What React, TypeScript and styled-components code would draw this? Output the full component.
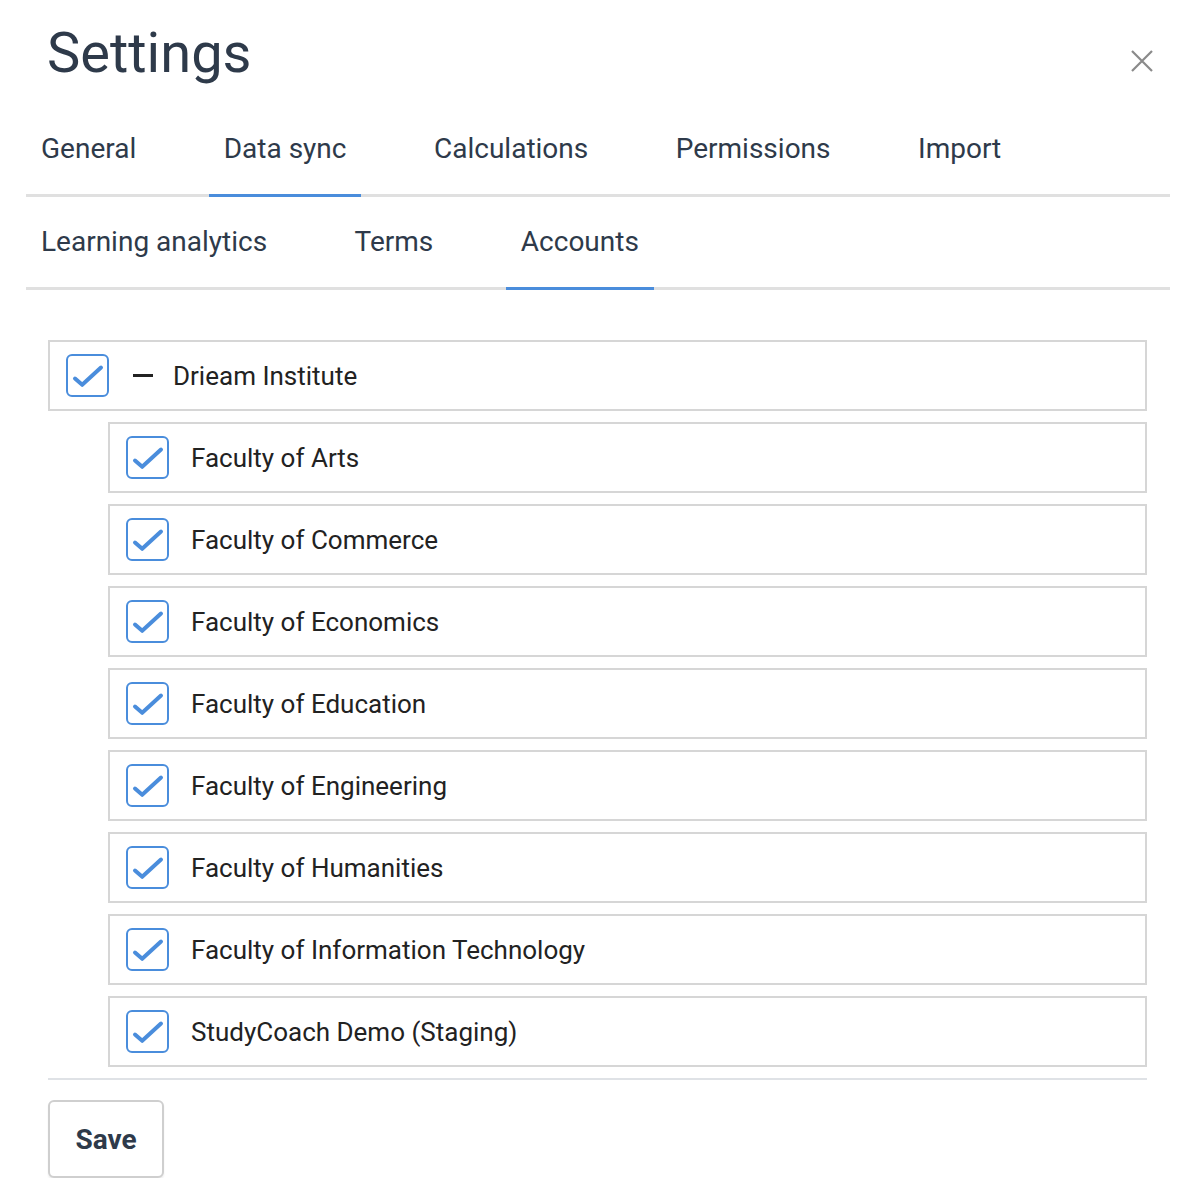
import React, { useState } from 'react';
import styled, { createGlobalStyle } from 'styled-components';

const GlobalStyle = createGlobalStyle`
  body {
    margin: 0;
    background: #fff;
    font-family: Roboto, "Liberation Sans", Arial, sans-serif;
  }
  * {
    box-sizing: border-box;
  }
`;

const Page = styled.div`
  padding: 0 26px;
  width: 1196px;
`;

const Header = styled.div`
  display: flex;
  justify-content: space-between;
  align-items: flex-start;
  padding: 18px 16px 0 21px;
  height: 104px;
`;

const Title = styled.h1`
  margin: 0;
  font-size: 56px;
  line-height: 70px;
  font-weight: 400;
  color: #2e3a4a;
`;

const CloseButton = styled.button`
  margin-top: 31px;
  width: 24px;
  height: 24px;
  padding: 0;
  border: none;
  background: none;
  cursor: pointer;
  display: grid;
  place-items: center;
`;

const TabRow = styled.div`
  display: flex;
  gap: 57.5px;
  border-bottom: 3px solid #e0e0e0;
`;

const Tab = styled.div<{ $active?: boolean }>`
  padding: 28px 15px 28px;
  font-size: 28px;
  line-height: 34px;
  color: #2e3a4a;
  cursor: pointer;
  border-bottom: 3px solid ${p => (p.$active ? '#4a8ddc' : 'transparent')};
  margin-bottom: -3px;
`;

const Body = styled.div`
  padding: 50px 23px 0 22px;
`;

const List = styled.div`
  display: flex;
  flex-direction: column;
  gap: 11px;
  padding-bottom: 11px;
  border-bottom: 2px solid #dfe2e6;
`;

const Row = styled.div<{ $depth: number }>`
  display: flex;
  align-items: center;
  margin-left: ${p => p.$depth * 60}px;
  height: 71px;
  padding: 0 16px;
  border: 2px solid #d6d6d6;
`;

const Box = styled.span`
  width: 43px;
  height: 43px;
  flex: none;
  border: 2px solid #4a8ddc;
  border-radius: 6px;
  display: grid;
  place-items: center;
`;

const Collapse = styled.span`
  width: 20px;
  height: 3px;
  margin: 0 20px 0 24px;
  background: #222;
`;

const Label = styled.span<{ $indent: number }>`
  margin-left: ${p => p.$indent}px;
  font-size: 26px;
  color: #222;
`;

const SaveButton = styled.button`
  margin-top: 20px;
  width: 116px;
  height: 78px;
  border: 2px solid #cfcfcf;
  border-radius: 6px;
  background: #fff;
  box-shadow: 0 2px 2px rgba(0, 0, 0, 0.07);
  font-family: Roboto, "Liberation Sans", Arial, sans-serif;
  font-size: 28px;
  font-weight: 700;
  color: #2e3a4a;
  cursor: pointer;
`;

// tick drawn in the 43px box's own coordinates
const Check = () => (
  <svg width="39" height="39" viewBox="2 2 39 39">
    <polyline
      points="9,24.5 16.2,30.8 35,13.5"
      fill="none"
      stroke="#4a8ddc"
      strokeWidth="4"
      strokeLinecap="round"
      strokeLinejoin="round"
    />
  </svg>
);

const accounts = [
  'Faculty of Arts',
  'Faculty of Commerce',
  'Faculty of Economics',
  'Faculty of Education',
  'Faculty of Engineering',
  'Faculty of Humanities',
  'Faculty of Information Technology',
  'StudyCoach Demo (Staging)',
];

const topTabs = ['General', 'Data sync', 'Calculations', 'Permissions', 'Import'];
const subTabs = ['Learning analytics', 'Terms', 'Accounts'];

export default function App() {
  const [tab] = useState('Data sync');
  const [subTab] = useState('Accounts');

  return (
    <Page>
      <GlobalStyle />
      <Header>
        <Title>Settings</Title>
        <CloseButton aria-label="Close">
          <svg width="24" height="24" viewBox="0 0 24 24">
            <path d="M2 2 L22 22 M22 2 L2 22" stroke="#8a8a8a" strokeWidth="2.2" />
          </svg>
        </CloseButton>
      </Header>

      <TabRow>
        {topTabs.map(t => (
          <Tab key={t} $active={t === tab}>{t}</Tab>
        ))}
      </TabRow>
      <TabRow>
        {subTabs.map(t => (
          <Tab key={t} $active={t === subTab}>{t}</Tab>
        ))}
      </TabRow>

      <Body>
        <List>
          <Row $depth={0}>
            <Box><Check /></Box>
            <Collapse />
            <Label $indent={0}>Drieam Institute</Label>
          </Row>
          {accounts.map(name => (
            <Row key={name} $depth={1}>
              <Box><Check /></Box>
              <Label $indent={22}>{name}</Label>
            </Row>
          ))}
        </List>
        <SaveButton>Save</SaveButton>
      </Body>
    </Page>
  );
}
